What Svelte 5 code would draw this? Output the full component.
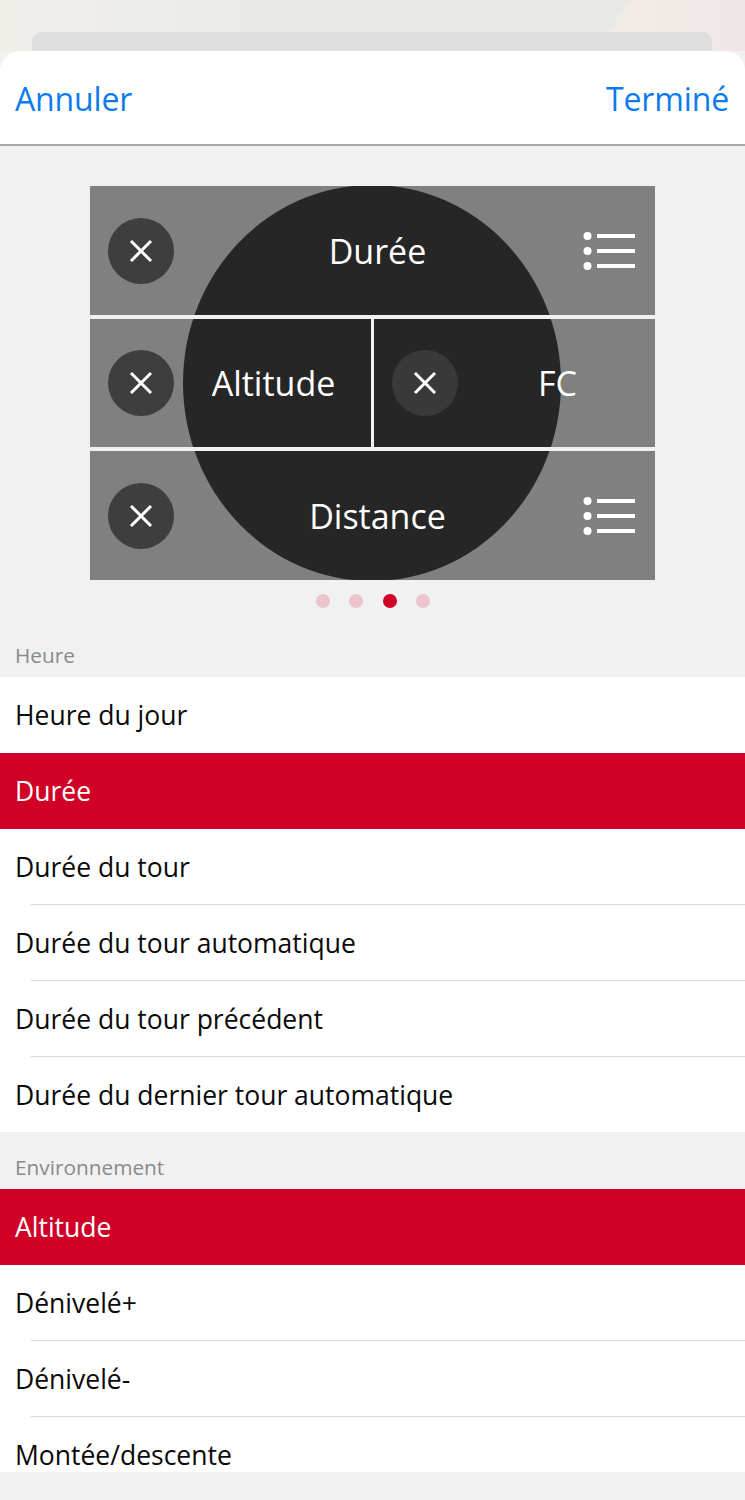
<script>
  const cells = [
    { label: "Durée", wide: true },
    { label: "Altitude" },
    { label: "FC" },
    { label: "Distance", wide: true }
  ];
  const dots = [false, false, true, false];
  const sections = [
    {
      title: "Heure",
      items: [
        { label: "Heure du jour", flat: true },
        { label: "Durée", active: true },
        { label: "Durée du tour" },
        { label: "Durée du tour automatique" },
        { label: "Durée du tour précédent" },
        { label: "Durée du dernier tour automatique", flat: true }
      ]
    },
    {
      title: "Environnement",
      items: [
        { label: "Altitude", active: true },
        { label: "Dénivelé+" },
        { label: "Dénivelé-" },
        { label: "Montée/descente", flat: true }
      ]
    }
  ];
</script>

<div class="page">
  <div class="backdrop">
    <div class="fur"></div>
    <div class="behind"></div>
  </div>
  <div class="sheet">
    <header>
      <span>Annuler</span>
      <span>Terminé</span>
    </header>
    <main>
      <div class="face">
        <div class="disc"></div>
        <div class="cells">
          {#each cells as cell}
            <div class="cell" class:wide={cell.wide}>
              <span class="remove">
                <svg width="26" height="26" viewBox="0 0 26 26">
                  <path d="M3 3 23 23M23 3 3 23" stroke="#fff" stroke-width="3" fill="none" />
                </svg>
              </span>
              <span class="name">{cell.label}</span>
              {#if cell.wide}
                <svg class="menu" width="52" height="38" viewBox="0 0 52 38">
                  <circle cx="4.5" cy="4" r="4" fill="#fff" />
                  <circle cx="4.5" cy="19" r="4" fill="#fff" />
                  <circle cx="4.5" cy="34" r="4" fill="#fff" />
                  <rect x="14" y="2" width="38" height="4" fill="#fff" />
                  <rect x="14" y="17" width="38" height="4" fill="#fff" />
                  <rect x="14" y="32" width="38" height="4" fill="#fff" />
                </svg>
              {/if}
            </div>
          {/each}
        </div>
      </div>
      <div class="dots">
        {#each dots as on}
          <i class:on></i>
        {/each}
      </div>
      <div class="list">
        {#each sections as section}
          <h2>{section.title}</h2>
          <ul>
            {#each section.items as item}
              <li class:active={item.active} class:flat={item.flat || item.active}>{item.label}</li>
            {/each}
          </ul>
        {/each}
      </div>
    </main>
  </div>
</div>

<style>
  :global(body) {
    margin: 0;
    background: #f1f1f1;
  }
  .page {
    width: 745px;
    height: 1500px;
    overflow: hidden;
    font-family: "Open Sans", sans-serif;
    background: #f1f1f1;
  }
  .backdrop {
    height: 51px;
    position: relative;
    overflow: hidden;
    background: linear-gradient(90deg, #f0efea 0%, #eeede9 14%, #e8e9e7 40%, #e8e9e7 100%);
  }
  .fur {
    position: absolute;
    inset: 0;
    background: linear-gradient(90deg, #f1ece7 600px, #ede8e5 745px);
    clip-path: polygon(630px 0, 745px 0, 745px 51px, 595px 51px);
  }
  .behind {
    position: absolute;
    left: 32px;
    right: 33px;
    top: 32px;
    height: 40px;
    background: #dedede;
    border-radius: 10px 10px 0 0;
  }
  .sheet {
    background: #f1f1f1;
    border-radius: 20px 20px 0 0;
    overflow: hidden;
    position: relative;
  }
  header {
    background: #fff;
    border-bottom: 2px solid #a9a9a9;
    display: flex;
    justify-content: space-between;
    align-items: center;
    padding: 2px 16px 0 15px;
    box-sizing: border-box;
    height: 95px;
    font-size: 32px;
    letter-spacing: -0.15px;
    color: #0a7cf0;
  }
  main {
    padding-top: 40px;
  }
  .face {
    width: 565px;
    height: 394px;
    margin-left: 90px;
    background: #808080;
    position: relative;
    overflow: hidden;
  }
  .disc {
    position: absolute;
    left: 93px;
    top: -1px;
    width: 378px;
    height: 396px;
    border-radius: 50%;
    background: #262626;
  }
  .cells {
    position: relative;
    display: grid;
    grid-template-columns: 281px 281px;
    grid-template-rows: 129px 128px 129px;
    gap: 4px 3px;
    height: 100%;
  }
  .cell {
    display: flex;
    align-items: center;
    position: relative;
    color: #fff;
    font-size: 34px;
    padding-left: 18px;
    box-shadow: 0 0 0 2px #f1f1f1;
  }
  .cell.wide {
    grid-column: 1 / 3;
  }
  .remove {
    width: 66px;
    height: 66px;
    border-radius: 50%;
    background: rgba(58, 58, 58, 0.95);
    display: flex;
    align-items: center;
    justify-content: center;
    flex: none;
  }
  .name {
    flex: 1;
    text-align: center;
    margin-right: -2px;
  }
  .wide .name {
    margin-right: 0;
    padding-right: 54px;
  }
  .menu {
    flex: none;
    margin-right: 20px;
    margin-left: -52px;
  }
  .dots {
    display: flex;
    gap: 19.4px;
    margin: 14px 0 0 316px;
    height: 14px;
  }
  .dots i {
    width: 14px;
    height: 14px;
    border-radius: 50%;
    background: #ecc4ce;
  }
  .dots i.on {
    background: #d00027;
  }
  h2 {
    margin: 0;
    font-size: 20.8px;
    font-weight: 400;
    color: #8a8a8a;
    height: 57px;
    line-height: 27px;
    padding: 22px 0 0 15px;
    box-sizing: border-box;
  }
  .list {
    margin-top: 12px;
    height: 852px;
    overflow: hidden;
  }
  ul {
    margin: 0;
    padding: 0;
    list-style: none;
    background: #fff;
  }
  li {
    height: 76px;
    line-height: 76px;
    padding-left: 15px;
    font-size: 26.5px;
    color: #0a0a0a;
    position: relative;
    box-sizing: border-box;
  }
  li:last-child {
    height: 75px;
  }
  li::after {
    content: "";
    position: absolute;
    left: 31px;
    right: 0;
    bottom: 0;
    height: 1px;
    background: #d8d8d8;
  }
  li.flat::after {
    display: none;
  }
  li.active {
    background: #d00027;
    color: #fff;
  }
</style>
